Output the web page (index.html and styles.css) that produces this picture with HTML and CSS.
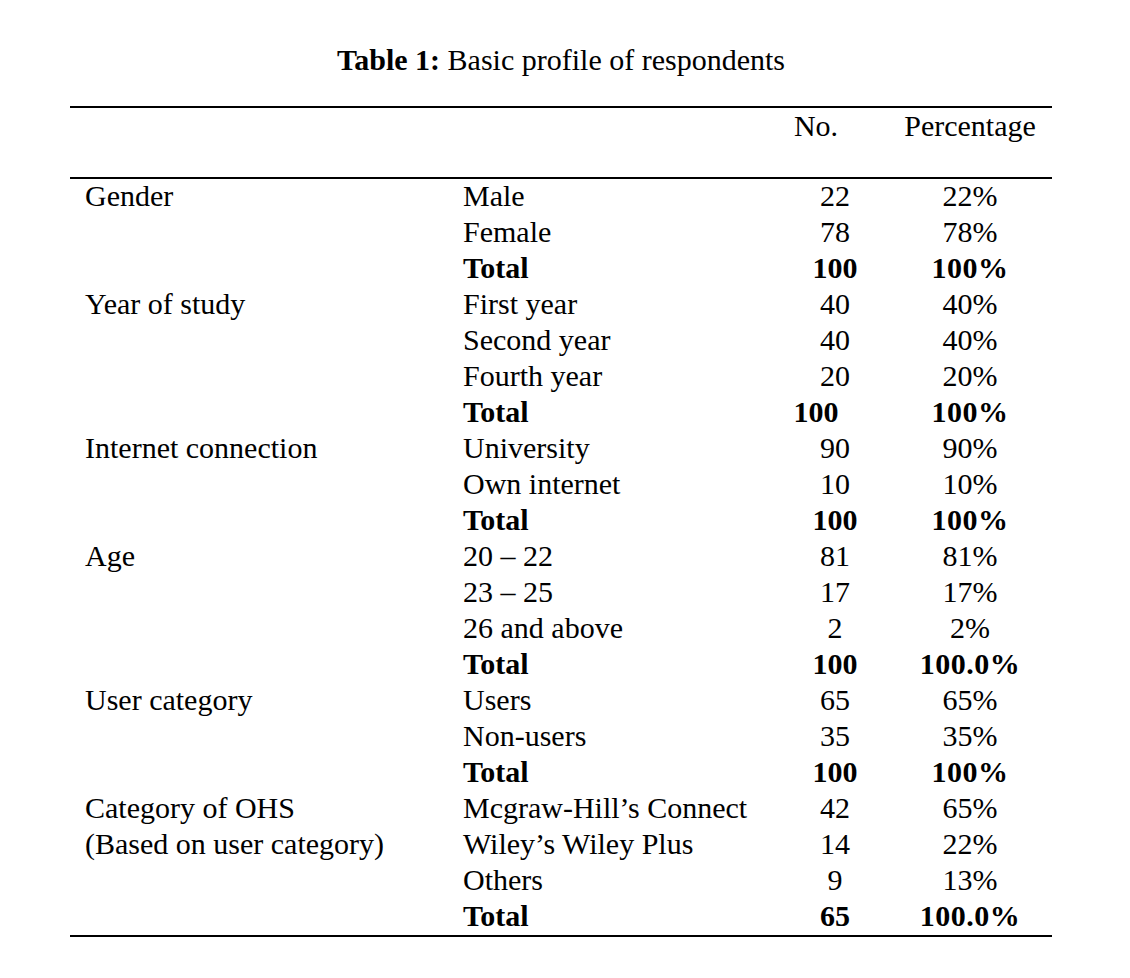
FILE: index.html
```html
<!DOCTYPE html>
<html lang="en">
<head>
<meta charset="utf-8">
<title>Table 1: Basic profile of respondents</title>
<link rel="stylesheet" href="styles.css">
</head>
<body>
<main class="page">
  <h1 class="caption"><b>Table 1:</b> Basic profile of respondents</h1>
  <table class="profile">
    <colgroup>
      <col class="c-cat">
      <col class="c-item">
      <col class="c-no">
      <col class="c-pct">
    </colgroup>
    <thead>
      <tr>
        <th></th>
        <th></th>
        <th class="no head-no">No.</th>
        <th class="pct">Percentage</th>
      </tr>
    </thead>
    <tbody>
      <tr><td class="cat">Gender</td><td class="item">Male</td><td class="no">22</td><td class="pct">22%</td></tr>
      <tr><td></td><td class="item">Female</td><td class="no">78</td><td class="pct">78%</td></tr>
      <tr class="total"><td></td><td class="item">Total</td><td class="no">100</td><td class="pct">100%</td></tr>

      <tr><td class="cat">Year of study</td><td class="item">First year</td><td class="no">40</td><td class="pct">40%</td></tr>
      <tr><td></td><td class="item">Second year</td><td class="no">40</td><td class="pct">40%</td></tr>
      <tr><td></td><td class="item">Fourth year</td><td class="no">20</td><td class="pct">20%</td></tr>
      <tr class="total"><td></td><td class="item">Total</td><td class="no shift">100</td><td class="pct">100%</td></tr>

      <tr><td class="cat">Internet connection</td><td class="item">University</td><td class="no">90</td><td class="pct">90%</td></tr>
      <tr><td></td><td class="item">Own internet</td><td class="no">10</td><td class="pct">10%</td></tr>
      <tr class="total"><td></td><td class="item">Total</td><td class="no">100</td><td class="pct">100%</td></tr>

      <tr><td class="cat">Age</td><td class="item">20 – 22</td><td class="no">81</td><td class="pct">81%</td></tr>
      <tr><td></td><td class="item">23 – 25</td><td class="no">17</td><td class="pct">17%</td></tr>
      <tr><td></td><td class="item">26 and above</td><td class="no">2</td><td class="pct">2%</td></tr>
      <tr class="total"><td></td><td class="item">Total</td><td class="no">100</td><td class="pct">100.0%</td></tr>

      <tr><td class="cat">User category</td><td class="item">Users</td><td class="no">65</td><td class="pct">65%</td></tr>
      <tr><td></td><td class="item">Non-users</td><td class="no">35</td><td class="pct">35%</td></tr>
      <tr class="total"><td></td><td class="item">Total</td><td class="no">100</td><td class="pct">100%</td></tr>

      <tr><td class="cat">Category of OHS</td><td class="item">Mcgraw-Hill’s Connect</td><td class="no">42</td><td class="pct">65%</td></tr>
      <tr><td class="cat">(Based on user category)</td><td class="item">Wiley’s Wiley Plus</td><td class="no">14</td><td class="pct">22%</td></tr>
      <tr><td></td><td class="item">Others</td><td class="no">9</td><td class="pct">13%</td></tr>
      <tr class="total"><td></td><td class="item">Total</td><td class="no">65</td><td class="pct">100.0%</td></tr>
    </tbody>
  </table>
</main>
</body>
</html>
```

FILE: styles.css
```css
html, body {
  margin: 0;
  padding: 0;
  background: #ffffff;
}

body {
  font-family: "Liberation Serif", "Times New Roman", serif;
  font-size: 30px;
  color: #000000;
}

.page {
  width: 982px;
  padding: 42px 0 0 70px;
}

.caption {
  margin: 0 0 28px 0;
  font-size: 30px;
  font-weight: normal;
  line-height: 36px;
  text-align: center;
}

.caption b {
  font-weight: bold;
}

.profile {
  width: 982px;
  border-collapse: collapse;
  table-layout: fixed;
  border-top: 2px solid #000;
  border-bottom: 2px solid #000;
}

.c-cat { width: 378px; }
.c-item { width: 327px; }
.c-no { width: 120px; }
.c-pct { width: 157px; }

.profile th,
.profile td {
  padding: 0;
  height: 36px;
  line-height: 34px;
  font-weight: normal;
  white-space: nowrap;
  vertical-align: top;
}

.profile thead th {
  height: 69px;
  line-height: 36px;
  border-bottom: 2px solid #000;
}

.cat {
  padding-left: 15px !important;
}

.item {
  padding-left: 15px !important;
}

.no {
  text-align: center;
}

.pct {
  text-align: center;
  padding-right: 7px !important;
}

.head-no,
.shift {
  padding-right: 38px !important;
}

.total td {
  font-weight: bold;
}

.total .pct {
  letter-spacing: 0.5px;
}
```
